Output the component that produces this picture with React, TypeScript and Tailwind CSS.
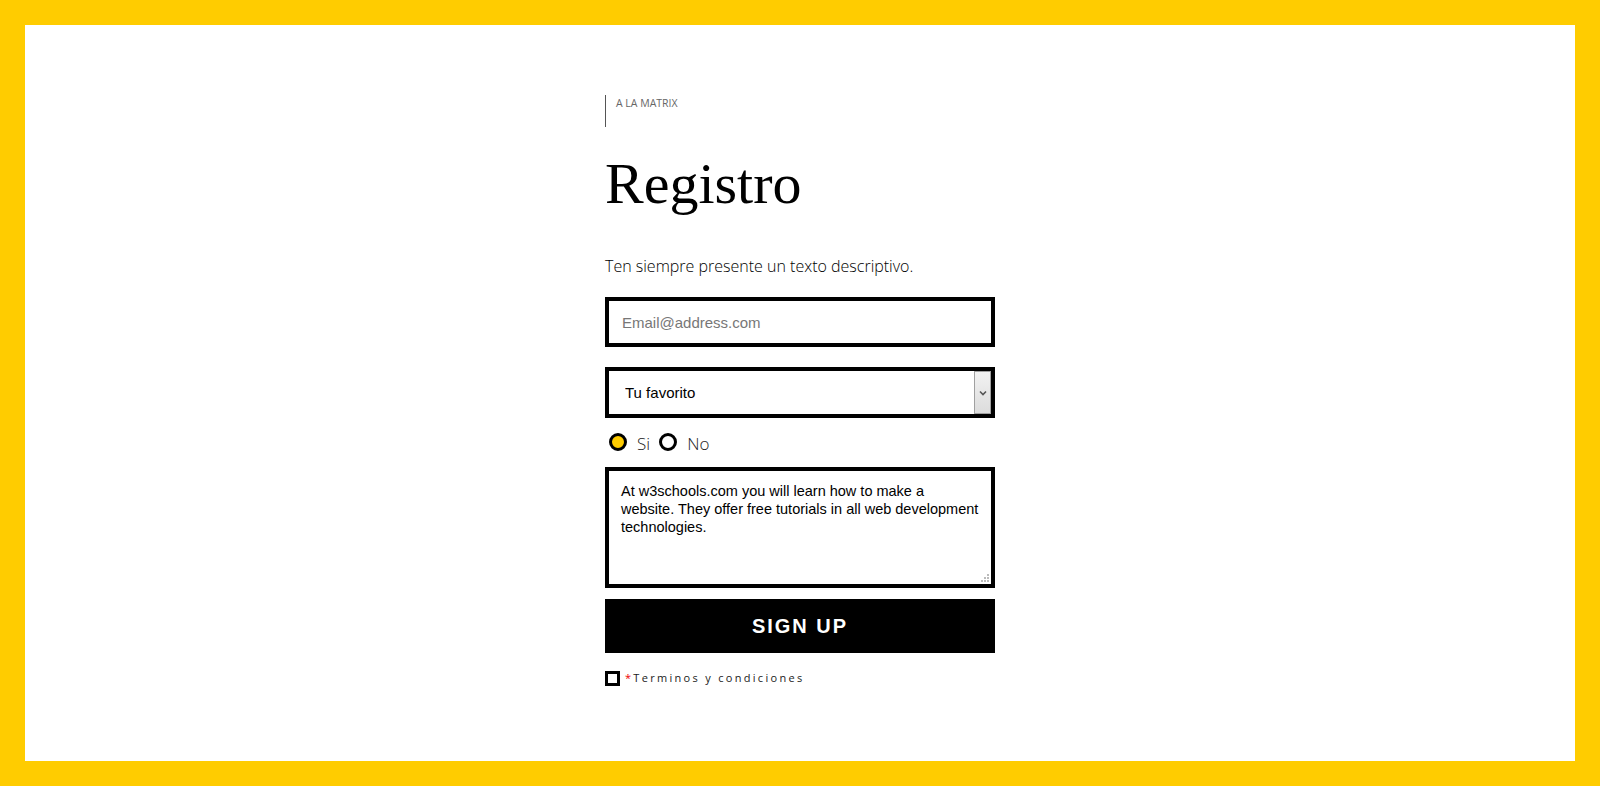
import { useState } from "react";

export default function App() {
  const [choice, setChoice] = useState("si");
  return (
    <div className="h-screen w-full bg-[#ffcc00] p-[25px]">
      <div className="h-full bg-white flex justify-center">
        <form className="w-[390px] pt-[70px] flex flex-col">
          <div className="border-l border-[#555] h-[32px] pl-[10px] pt-[1px] text-[10.5px] leading-[14px] text-[#666] font-['Open_Sans',sans-serif]">
            A LA MATRIX
          </div>
          <h1 className="mt-[22px] text-[58px] leading-[70px] text-black font-['Liberation_Serif',serif]">
            Registro
          </h1>
          <p className="mt-[37px] text-[16px] leading-[21px] font-light text-black font-['Open_Sans',sans-serif]">
            Ten siempre presente un texto descriptivo.
          </p>
          <input
            type="email"
            placeholder="Email@address.com"
            className="mt-[20px] h-[50px] w-full border-4 border-black px-[13px] text-[15px] text-black placeholder:text-[#777] outline-none font-['Liberation_Sans',Arial,sans-serif]"
          />
          <div className="relative mt-[20px] h-[51px]">
            <select className="appearance-none h-full w-full border-4 border-black bg-white pl-[16px] pt-[2px] text-[15px] text-black outline-none font-['Liberation_Sans',Arial,sans-serif]">
              <option>Tu favorito</option>
              <option>Opción 1</option>
              <option>Opción 2</option>
            </select>
            <div className="pointer-events-none absolute right-[4px] top-[4px] bottom-[4px] w-[17px] border border-[#a0a0a0] bg-gradient-to-b from-[#f2f2f2] to-[#dcdcdc] flex items-center justify-center">
              <svg width="8" height="6" viewBox="0 0 8 6">
                <path d="M1 1.5 L4 4.5 L7 1.5" fill="none" stroke="#555" strokeWidth="1.6" />
              </svg>
            </div>
          </div>
          <div className="mt-[15px] flex items-center h-[18px] text-[17px] text-[#222] font-light font-['Open_Sans',sans-serif]">
            <label className="flex items-center cursor-pointer" onClick={() => setChoice("si")}>
              <span className={`ml-[4px] w-[18px] h-[18px] rounded-full border-[3px] border-black ${choice === "si" ? "bg-[#ffcc00]" : "bg-white"}`} />
              <span className="ml-[10px] mt-[3px]">Si</span>
            </label>
            <label className="flex items-center cursor-pointer ml-[9px]" onClick={() => setChoice("no")}>
              <span className={`w-[18px] h-[18px] rounded-full border-[3px] border-black ${choice === "no" ? "bg-[#ffcc00]" : "bg-white"}`} />
              <span className="ml-[10px] mt-[3px]">No</span>
            </label>
          </div>
          <div className="relative mt-[16px] h-[121px]">
            <textarea
              className="h-full w-full resize-none border-4 border-black px-[12px] pt-[11px] pb-[8px] text-[14.5px] leading-[18px] text-black outline-none font-['Liberation_Sans',Arial,sans-serif]"
              defaultValue="At w3schools.com you will learn how to make a website. They offer free tutorials in all web development technologies."
            />
            <svg className="pointer-events-none absolute right-[6px] bottom-[6px]" width="8" height="8" viewBox="0 0 8 8">
              <rect x="6" y="0" width="2" height="2" fill="#bbb" />
              <rect x="3" y="3" width="2" height="2" fill="#bbb" />
              <rect x="6" y="3" width="2" height="2" fill="#bbb" />
              <rect x="0" y="6" width="2" height="2" fill="#bbb" />
              <rect x="3" y="6" width="2" height="2" fill="#bbb" />
              <rect x="6" y="6" width="2" height="2" fill="#bbb" />
            </svg>
          </div>
          <button
            type="button"
            className="mt-[11px] h-[54px] w-full bg-black text-white text-[20px] font-bold tracking-[2px] font-['Liberation_Sans',Arial,sans-serif]"
          >
            SIGN UP
          </button>
          <label className="mt-[18px] flex items-center h-[15px] cursor-pointer">
            <span className="w-[15px] h-[15px] border-[3px] border-black bg-white" />
            <span className="ml-[5px] text-[11px] tracking-[2.3px] text-[#222] font-['Open_Sans',sans-serif]">
              <span className="text-[#e00]">*</span>Terminos y condiciones
            </span>
          </label>
        </form>
      </div>
    </div>
  );
}
